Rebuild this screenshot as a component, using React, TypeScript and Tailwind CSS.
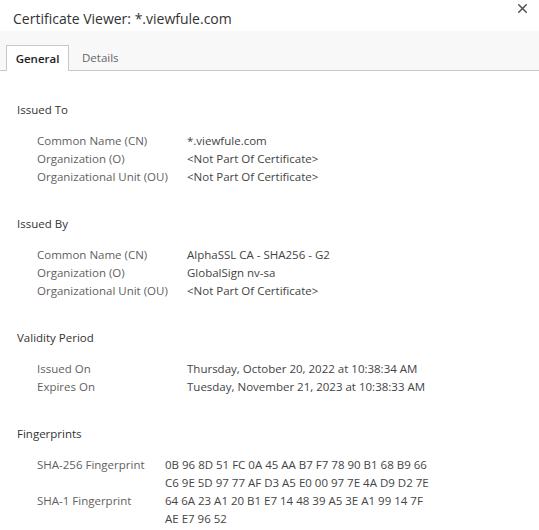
import { X } from 'lucide-react';

type Row = { label: string; value: string[] };
type Section = { title: string; labelWidth: string; rows: Row[] };

const sections: Section[] = [
  {
    title: 'Issued To',
    labelWidth: 'w-[150px]',
    rows: [
      { label: 'Common Name (CN)', value: ['*.viewfule.com'] },
      { label: 'Organization (O)', value: ['<Not Part Of Certificate>'] },
      { label: 'Organizational Unit (OU)', value: ['<Not Part Of Certificate>'] },
    ],
  },
  {
    title: 'Issued By',
    labelWidth: 'w-[150px]',
    rows: [
      { label: 'Common Name (CN)', value: ['AlphaSSL CA - SHA256 - G2'] },
      { label: 'Organization (O)', value: ['GlobalSign nv-sa'] },
      { label: 'Organizational Unit (OU)', value: ['<Not Part Of Certificate>'] },
    ],
  },
  {
    title: 'Validity Period',
    labelWidth: 'w-[150px]',
    rows: [
      { label: 'Issued On', value: ['Thursday, October 20, 2022 at 10:38:34 AM'] },
      { label: 'Expires On', value: ['Tuesday, November 21, 2023 at 10:38:33 AM'] },
    ],
  },
  {
    title: 'Fingerprints',
    labelWidth: 'w-[128px]',
    rows: [
      {
        label: 'SHA-256 Fingerprint',
        value: [
          '0B 96 8D 51 FC 0A 45 AA B7 F7 78 90 B1 68 B9 66',
          'C6 9E 5D 97 77 AF D3 A5 E0 00 97 7E 4A D9 D2 7E',
        ],
      },
      {
        label: 'SHA-1 Fingerprint',
        value: ['64 6A 23 A1 20 B1 E7 14 48 39 A5 3E A1 99 14 7F', 'AE E7 96 52'],
      },
    ],
  },
];

export default function App() {
  return (
    <div className="w-[539px] h-[530px] overflow-hidden bg-white font-['Open_Sans',sans-serif] text-[11.5px]">
      {/* Title bar */}
      <div className="flex h-[31px] items-start justify-between pl-[13px] pr-[9px]">
        <h1 className="pt-[8px] text-[14px] leading-[22px] text-[#333]">Certificate Viewer: *.viewfule.com</h1>
        <button className="mt-[1px] text-[#555]">
          <X size={15} strokeWidth={2.5} />
        </button>
      </div>

      {/* Tabs */}
      <div className="flex h-[40px] items-end border-b border-[#c8c8c8] bg-[#f8f8f8] pl-[6px]">
        <div className="-mb-px flex h-[26px] w-[63px] items-center justify-center border border-b-0 border-[#c8c8c8] bg-white pt-[1px] font-semibold text-[#222]">
          General
        </div>
        <div className="flex h-[25px] items-center px-[13px] pt-[1px] text-[#666]">Details</div>
      </div>

      {/* Body */}
      <div className="pl-[17px] pt-[30px]">
        {sections.map((s) => (
          <div key={s.title} className="mb-[29px]">
            <div className="leading-[18px] text-[#333]">{s.title}</div>
            <div className="mt-[13px] pl-[20px]">
              {s.rows.map((r) => (
                <div key={r.label} className="flex leading-[18px]">
                  <div className={`${s.labelWidth} shrink-0 text-[#5f5f5f]`}>{r.label}</div>
                  <div className="text-[#444]">
                    {r.value.map((v) => (
                      <div key={v}>{v}</div>
                    ))}
                  </div>
                </div>
              ))}
            </div>
          </div>
        ))}
      </div>
    </div>
  );
}
